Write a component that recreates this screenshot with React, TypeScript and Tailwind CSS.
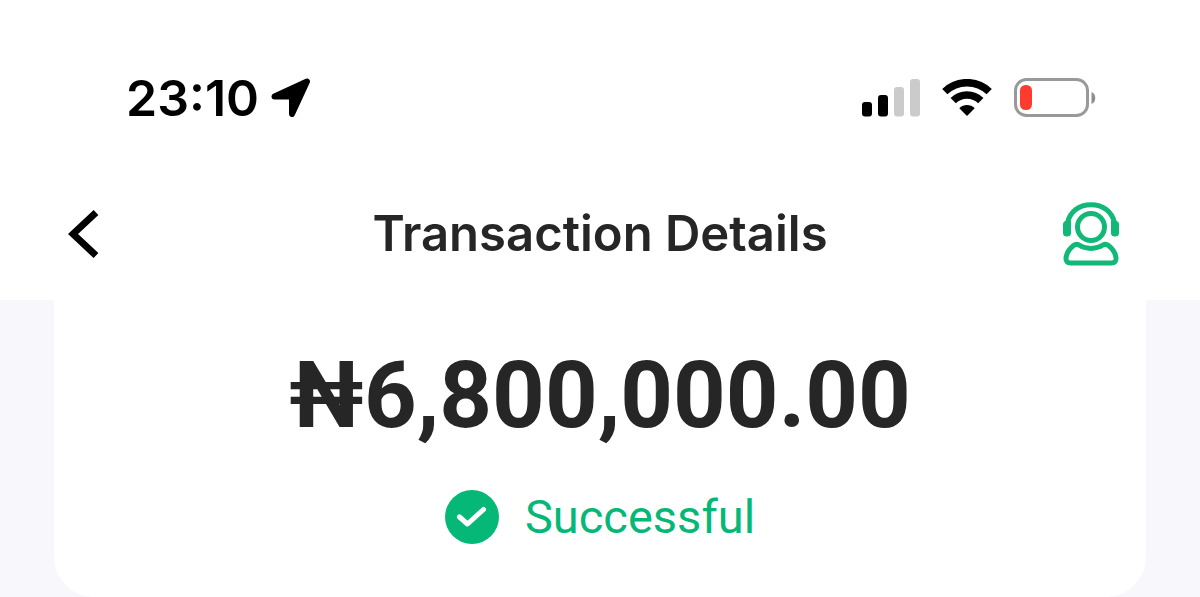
import React from 'react';

const LocationArrow: React.FC = () => (
  <svg viewBox="0 0 40 40" className="w-10 h-10" aria-hidden="true">
    <path
      d="M3.5 18.5 36 3.5 21 36V18.5Z"
      fill="currentColor"
      stroke="currentColor"
      strokeWidth="6"
      strokeLinejoin="round"
    />
  </svg>
);

const SignalBars: React.FC = () => (
  <svg viewBox="0 0 58 38" className="w-[58px] h-[38px]" aria-hidden="true">
    <rect x="0" y="23" width="10" height="14.5" rx="3" fill="#000" />
    <rect x="16" y="16" width="10" height="21.5" rx="3" fill="#000" />
    <rect x="32" y="8" width="10" height="29.5" rx="3" fill="#cbcbcb" />
    <rect x="48" y="0" width="10" height="37.5" rx="3" fill="#cbcbcb" />
  </svg>
);

const WifiIcon: React.FC = () => (
  <svg viewBox="0 0 50 38" className="w-[50px] h-[38px]" aria-hidden="true">
    <g fill="none" stroke="#000" strokeWidth="7.5">
      <path d="M2.8 12.6a32 32 0 0 1 44.400 0" />
      <path d="M11.2 21.600a19.6 19.6 0 0 1 27.6 0" />
    </g>
    <path d="M17.3 29.300C21.500 25 28.500 25 32.700 29.300L25 37Z" fill="#000" />
  </svg>
);

const BatteryIcon: React.FC = () => (
  <svg viewBox="0 0 82 40" className="w-[82px] h-10" aria-hidden="true">
    <rect x="1.5" y="1.5" width="72" height="36" rx="11" fill="none" stroke="#999" strokeWidth="3" />
    <rect x="6" y="7" width="12" height="25" rx="5.5" fill="#ff3b30" />
    <path d="M77.500 14c5 1.500 5 10.500 0 12Z" fill="#8e8e8e" />
  </svg>
);

const SupportIcon: React.FC = () => (
  <svg viewBox="0 0 58 66" className="w-[58px] h-[66px]" aria-hidden="true">
    <g fill="none" stroke="currentColor" strokeWidth="5" strokeLinecap="round" strokeLinejoin="round">
      <circle cx="29" cy="26" r="13.5" />
      <path d="M5.500 22C8 10.500 17 3.800 29 3.800S50 10.500 52.500 22" />
      <path d="M17 44C24 48.500 34 48.500 41 44C43 43 44.500 43 46.500 44.500C51 48 53.500 52.500 54 57C54.200 60.500 52.500 62 49.500 62H8.500C5.500 62 3.800 60.500 4 57C4.500 52.500 7 48 11.500 44.500C13.500 43 15 43 17 44Z" />
    </g>
    <path
      d="M5 19.500H9V32Q9 35.500 5 35.500T1 32V23.500Q1 20 5 19.500ZM53 19.500H49V32Q49 35.500 53 35.500T57 32V23.500Q57 20 53 19.500Z"
      fill="currentColor"
    />
  </svg>
);

const StatusBar: React.FC = () => (
  <div className="flex items-center justify-between pt-[68px] pl-[126px] pr-[104px] text-black">
    <div className="flex items-center gap-3">
      <span className="text-[50px] leading-[60px] font-semibold">23:10</span>
      <LocationArrow />
    </div>
    <div className="flex items-center gap-[22px]">
      <SignalBars />
      <WifiIcon />
      <BatteryIcon />
    </div>
  </div>
);

const Header: React.FC = () => (
  <header className="bg-white pb-[33px]">
    <StatusBar />
    <div className="pt-[73px] grid grid-cols-[1fr_auto_1fr] items-center px-[68px]">
      <button type="button" aria-label="Back" className="justify-self-start text-black">
        <svg viewBox="0 0 32 50" className="w-8 h-[50px]" aria-hidden="true">
          <path d="M28 3.500 5 25 28 46.500" fill="none" stroke="currentColor" strokeWidth="7" />
        </svg>
      </button>
      <h1 className="text-[49px] leading-[66px] font-semibold">Transaction Details</h1>
      <button type="button" aria-label="Customer support" className="justify-self-end pr-3 text-[#12b877]">
        <SupportIcon />
      </button>
    </div>
  </header>
);

export default function App() {
  return (
    <div className="bg-[#f7f7fc] font-['Inter',sans-serif] text-[#262626]">
      <Header />
      <main className="px-[54px]">
        <section className="flex flex-col items-center rounded-b-[40px] bg-white pt-10 pb-[50px] font-['Roboto',sans-serif]">
          <p className="text-[92px] leading-[112px] font-bold">₦6,800,000.00</p>
          <div className="mt-[35px] flex items-center gap-[26px] text-[#05b877]">
            <svg viewBox="0 0 54 54" className="w-[54px] h-[54px]" aria-hidden="true">
              <circle cx="27" cy="27" r="27" fill="currentColor" />
              <path
                d="M14.500 27 22.500 34 38.500 19.500"
                fill="none"
                stroke="#fff"
                strokeWidth="5"
                strokeLinecap="round"
                strokeLinejoin="round"
              />
            </svg>
            <span className="text-[47px] leading-[60px]">Successful</span>
          </div>
        </section>
      </main>
    </div>
  );
}
